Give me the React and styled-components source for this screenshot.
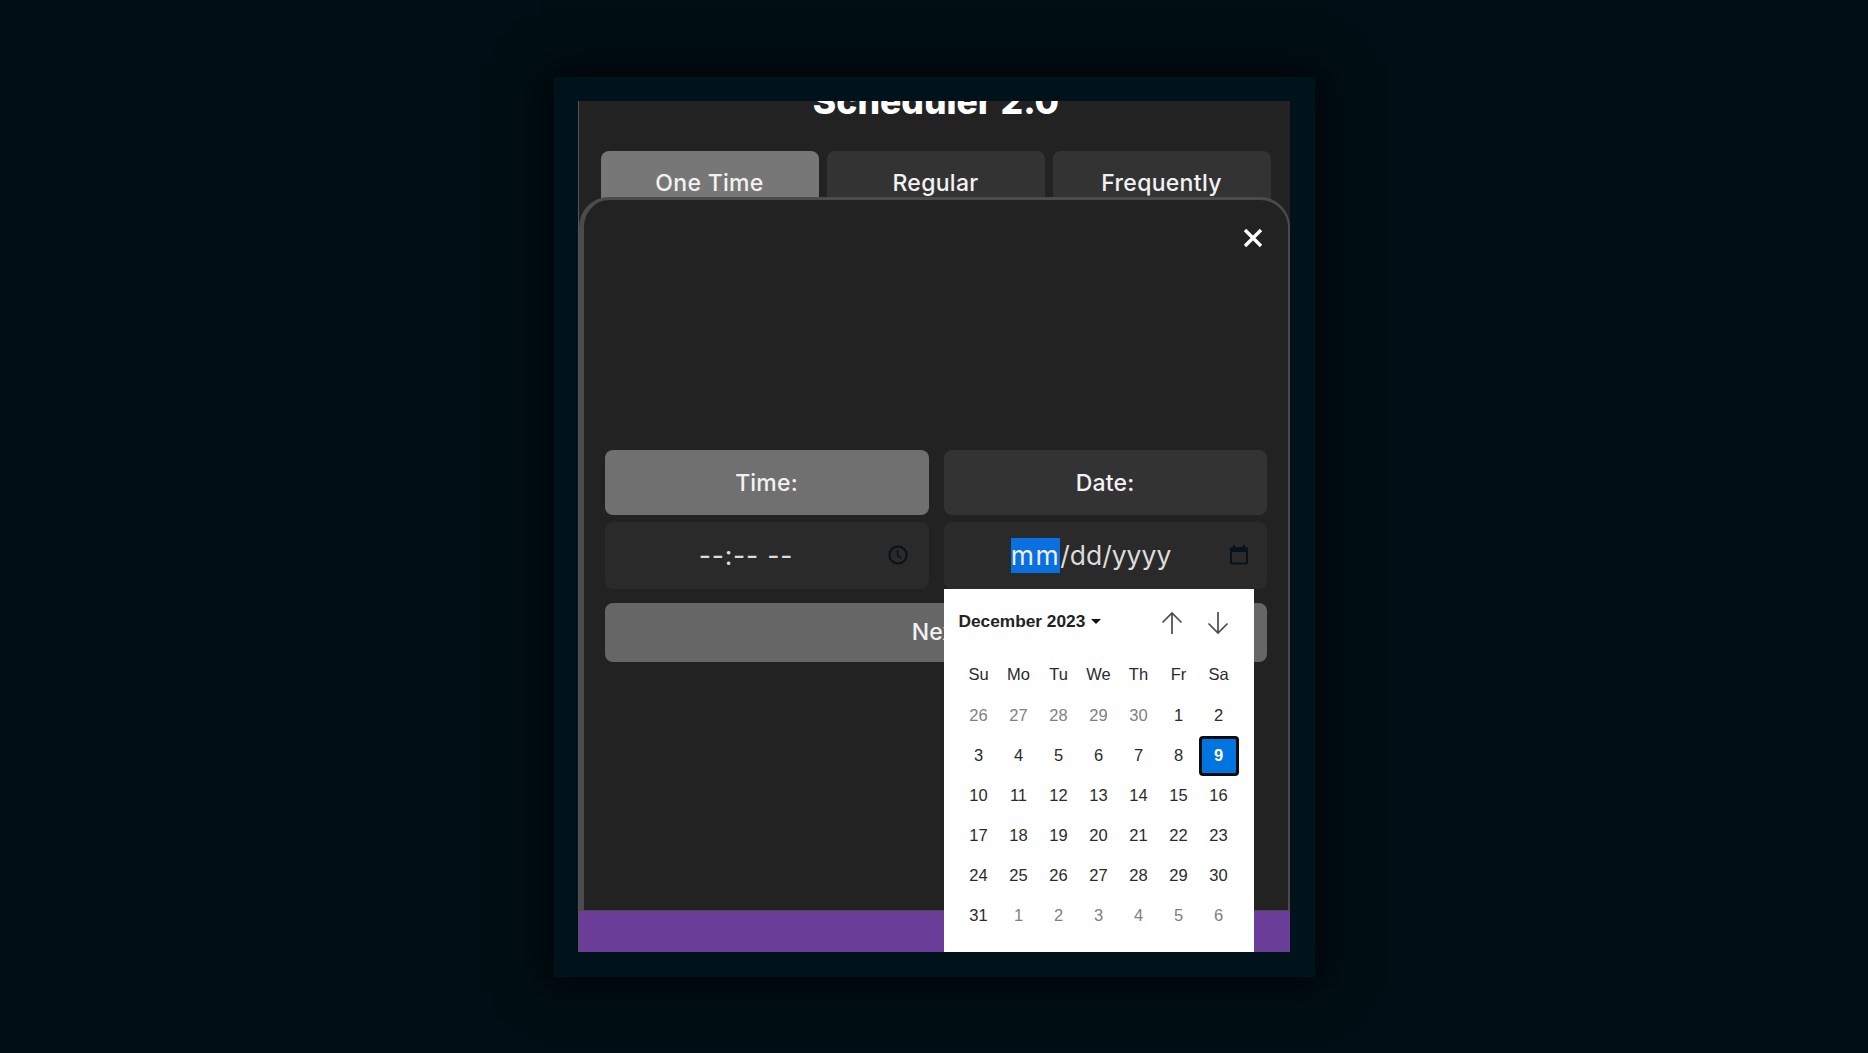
import React from 'react';
import styled, { createGlobalStyle } from 'styled-components';

const GlobalStyle = createGlobalStyle`
  html, body {
    margin: 0;
    height: 100%;
    background: #000f15;
    font-family: Inter, "Liberation Sans", sans-serif;
  }
  #root {
    height: 100%;
  }
`;

const Page = styled.div`
  height: 100%;
  display: flex;
  align-items: center;
  justify-content: center;
`;

const Frame = styled.div`
  box-sizing: border-box;
  width: 761px;
  height: 900px;
  padding: 24px 25px 25px 24px;
  background: #00121a;
  box-shadow: 0 0 40px 14px rgba(0, 0, 0, 0.6);
`;

const Panel = styled.div`
  position: relative;
  box-sizing: border-box;
  height: 851px;
  background: #222;
  overflow: hidden;
  display: flex;
  flex-direction: column;
  border-left: 1px solid #555;
`;

const Title = styled.h1`
  margin: -19px 0 29px;
  height: 40px;
  padding-left: 4px;
  font-size: 35.5px;
  line-height: 40px;
  font-weight: 800;
  color: #fff;
  text-align: center;
`;

const Tabs = styled.div`
  display: grid;
  grid-template-columns: repeat(3, 218px);
  gap: 8px;
  padding-left: 22px;
`;

const Tab = styled.div`
  height: 64px;
  border-radius: 8px;
  background: ${p => (p.$active ? '#777' : '#333')};
  color: #f2f2f2;
  font-size: 23px;
  font-weight: 500;
  letter-spacing: 0.3px;
  display: flex;
  align-items: center;
  justify-content: center;
`;

const Footer = styled.div`
  margin-top: auto;
  height: 42px;
  background: #6b3f99;
`;

const Modal = styled.div`
  position: absolute;
  top: 96px;
  left: 0;
  right: 0;
  bottom: 41px;
  box-sizing: border-box;
  background: #222;
  border-style: solid;
  border-color: #4b4b4b;
  border-width: 3px 2px 1px 5px;
  border-radius: 30px 30px 0 0;
  padding: 250px 22px 0 21px;
`;

const Close = styled.button`
  position: absolute;
  top: 28px;
  right: 25px;
  width: 20px;
  height: 20px;
  padding: 0;
  border: 0;
  background: none;
  color: #fff;
  display: block;
`;

const Form = styled.div`
  display: grid;
  grid-template-columns: 324px 323px;
  grid-template-rows: 65px 67px 66px;
  column-gap: 15px;
  row-gap: 7px;
`;

const Label = styled.div`
  box-sizing: border-box;
  padding-top: 2px;
  border-radius: 8px;
  background: ${p => (p.$active ? '#707070' : '#333')};
  color: #f2f2f2;
  font-size: 23px;
  font-weight: 500;
  letter-spacing: 0.2px;
  display: flex;
  align-items: center;
  justify-content: center;
`;

const Field = styled.div`
  position: relative;
  border-radius: 8px;
  background: #2a2a2a;
  color: #dcdcdc;
  display: flex;
  align-items: center;
  padding: 0 ${p => p.$right}px 0 ${p => p.$left}px;
`;

const FieldText = styled.div`
  flex: 1;
  font-size: 26.5px;
  letter-spacing: ${p => p.$spacing}px;
  text-align: center;
`;

const Selected = styled.span`
  display: inline-block;
  height: 35px;
  line-height: 35px;
  letter-spacing: 1.5px;
  background: #0a70e0;
  color: #eee;
`;

const NextButton = styled.div`
  grid-column: 1 / 3;
  margin-top: 7px;
  padding-left: 4px;
  border-radius: 8px;
  background: #666;
  color: #f2f2f2;
  font-size: 23px;
  font-weight: 500;
  display: flex;
  align-items: center;
  justify-content: center;
`;

const Popup = styled.div`
  position: absolute;
  z-index: 2;
  top: 100%;
  left: 0;
  box-sizing: border-box;
  width: 310px;
  height: 380px;
  padding: 0 15px;
  background: #fff;
  color: #1a1a1a;
  font-family: "Liberation Sans", Arial, sans-serif;
`;

const PopupHeader = styled.div`
  height: 65px;
  display: flex;
  align-items: center;
  padding-right: 9px;
`;

const Month = styled.div`
  font-size: 17.3px;
  font-weight: 700;
  color: #222;
`;

const Caret = styled.span`
  width: 0;
  height: 0;
  margin-left: 6px;
  border-style: solid;
  border-width: 5.5px 5px 0;
  border-color: #111 transparent transparent;
`;

const Arrows = styled.div`
  margin: 3px 0 0 auto;
  display: flex;
  gap: 22px;
  color: #4c4c4c;
`;

const Days = styled.div`
  display: grid;
  grid-template-columns: repeat(7, 40px);
  grid-template-rows: 42px;
  grid-auto-rows: 40px;
`;

const Day = styled.div`
  display: flex;
  align-items: center;
  justify-content: center;
  font-size: 16.5px;
  color: ${p => (p.$muted ? '#808080' : '#2a2a2a')};
`;

const Today = styled(Day)`
  box-sizing: border-box;
  background: #0075e0;
  border: 3px solid #0c0c0c;
  border-radius: 4px;
  color: #fff;
  font-weight: 700;
`;

const CloseIcon = () => (
  <svg width="20" height="20" viewBox="0 0 20 20" fill="none" stroke="currentColor" strokeWidth="3.4">
    <path d="M2 2l16 16M18 2L2 18" />
  </svg>
);

const ClockIcon = () => (
  <svg width="20" height="20" viewBox="0 0 20 20" fill="none" stroke="#07121a" strokeWidth="2">
    <circle cx="10" cy="10" r="8.6" />
    <path d="M9.6 5v5.4l3.4 3" strokeWidth="1.6" />
  </svg>
);

const CalendarIcon = () => (
  <svg width="20" height="20" viewBox="0 0 20 20" fill="none">
    <path d="M5 0v3M15 0v3" stroke="#07121a" strokeWidth="2" />
    <rect x="1" y="2" width="18" height="17.5" rx="2" fill="#07121a" />
    <rect x="3" y="7" width="14" height="10.5" fill="#2a2a2a" />
  </svg>
);

const ArrowIcon = ({ d }) => (
  <svg width="24" height="24" viewBox="0 0 24 24" fill="none" stroke="currentColor" strokeWidth="1.7">
    <path d={d} />
  </svg>
);

const weekdays = ['Su', 'Mo', 'Tu', 'We', 'Th', 'Fr', 'Sa'];
const before = [26, 27, 28, 29, 30];
const december = Array.from({ length: 31 }, (_, i) => i + 1);
const after = [1, 2, 3, 4, 5, 6];

export default function App() {
  return (
    <Page>
      <GlobalStyle />
      <Frame>
        <Panel>
          <Title>Scheduler 2.0</Title>
          <Tabs>
            <Tab $active>One Time</Tab>
            <Tab>Regular</Tab>
            <Tab>Frequently</Tab>
          </Tabs>
          <Footer />
          <Modal>
            <Close aria-label="Close">
              <CloseIcon />
            </Close>
            <Form>
              <Label $active>Time:</Label>
              <Label>Date:</Label>
              <Field $left={0} $right={21}>
                <FieldText $spacing={0.8}>--:-- --</FieldText>
                <ClockIcon />
              </Field>
              <Field $left={10} $right={18}>
                <FieldText $spacing={0}>
                  <Selected>mm</Selected>/dd/yyyy
                </FieldText>
                <CalendarIcon />
                <Popup>
                  <PopupHeader>
                    <Month>December 2023</Month>
                    <Caret />
                    <Arrows>
                      <ArrowIcon d="M12 23V2M2.5 11.5L12 2l9.5 9.5" />
                      <ArrowIcon d="M12 1v21M2.5 12.5L12 22l9.5-9.5" />
                    </Arrows>
                  </PopupHeader>
                  <Days>
                    {weekdays.map(name => (
                      <Day key={name}>{name}</Day>
                    ))}
                    {before.map(n => (
                      <Day key={`before-${n}`} $muted>
                        {n}
                      </Day>
                    ))}
                    {december.map(n =>
                      n === 9 ? <Today key={n}>{n}</Today> : <Day key={n}>{n}</Day>
                    )}
                    {after.map(n => (
                      <Day key={`after-${n}`} $muted>
                        {n}
                      </Day>
                    ))}
                  </Days>
                </Popup>
              </Field>
              <NextButton>Next</NextButton>
            </Form>
          </Modal>
        </Panel>
      </Frame>
    </Page>
  );
}
